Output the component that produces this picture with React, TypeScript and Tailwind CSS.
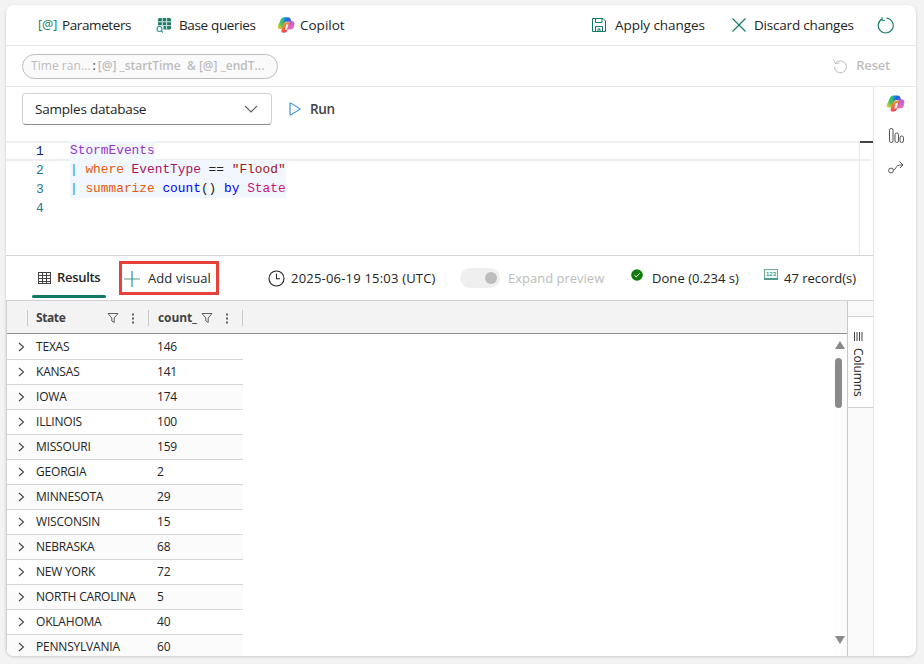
import React from "react";

const rows: [string, number][] = [
  ["TEXAS", 146], ["KANSAS", 141], ["IOWA", 174], ["ILLINOIS", 100], ["MISSOURI", 159], ["GEORGIA", 2],
  ["MINNESOTA", 29], ["WISCONSIN", 15], ["NEBRASKA", 68], ["NEW YORK", 72], ["NORTH CAROLINA", 5], ["OKLAHOMA", 40], ["PENNSYLVANIA", 60],
];

function CopilotIcon({ id, size }: { id: string; size: number }) {
  return (
    <svg width={size} height={size} viewBox="0 0 20 20" className="shrink-0">
      <defs>
        <linearGradient id={id + "a"} x1="0" y1="0" x2="1" y2="0.4">
          <stop offset="0" stopColor="#17a9d8" />
          <stop offset="0.55" stopColor="#1f63dd" />
          <stop offset="1" stopColor="#7a55e0" />
        </linearGradient>
        <linearGradient id={id + "b"} x1="0.2" y1="0" x2="0.6" y2="1">
          <stop offset="0" stopColor="#f7a93c" />
          <stop offset="0.5" stopColor="#f4683f" />
          <stop offset="1" stopColor="#e93d5c" />
        </linearGradient>
        <linearGradient id={id + "c"} x1="0.8" y1="0" x2="0.2" y2="1">
          <stop offset="0" stopColor="#1fb5a0" />
          <stop offset="0.6" stopColor="#55c24e" />
          <stop offset="1" stopColor="#e5cf3a" />
        </linearGradient>
        <linearGradient id={id + "d"} x1="0.3" y1="0" x2="0.7" y2="1">
          <stop offset="0" stopColor="#a35fe6" />
          <stop offset="1" stopColor="#f06bb0" />
        </linearGradient>
      </defs>
      <path d="M8 1.500C6 1.500 4.800 2.500 4 4.500L1 11c-.8 2 .2 3.500 2.300 3.500H6.500L10 4.500z" fill={`url(#${id}c)`} />
      <path d="M8 1.500h4c1.800 0 2.800.8 3.300 2.500l.7 2.500H10C9 6.500 8.300 7 8 8L7 11 8 1.500z" fill={`url(#${id}a)`} />
      <path d="M13.500 5.500H16c2.500 0 3.800 1.800 3.300 4l-.6 2.500c-.5 2-1.800 3-3.700 3H11.500z" fill={`url(#${id}d)`} />
      <path d="M9.800 7H14l-2.200 8c-.6 2.200-1.800 3.500-3.800 3.500H7c-1.800 0-2.600-1.200-2-3l2.400-6.800C7.800 7.700 8.600 7 9.800 7z" fill={`url(#${id}b)`} />
      <path d="M10.300 9.500h2.400l-1.600 5.800H8.600z" fill="#fff" opacity="0.9" />
    </svg>
  );
}

function BaseQueriesIcon() {
  return (
    <svg width="16" height="16" viewBox="0 0 16 16" className="shrink-0">
      <rect x="2" y="1" width="13" height="11.500" rx="1.500" fill="#1f7a68" />
      <path d="M6.300 1v11.500M10.600 1v11.500M2 4.800h13M2 8.600h13" stroke="#cfe6df" strokeWidth="1" />
      <rect x="0.500" y="9" width="7" height="7" fill="#fff" />
      <circle cx="3.500" cy="12" r="2.500" fill="#fff" stroke="#2a8fa5" strokeWidth="1.100" />
      <path d="M5.300 13.800l1.700 1.700" stroke="#2a8fa5" strokeWidth="1.100" />
    </svg>
  );
}

function ColumnFilter() {
  return (
    <svg width="12" height="12" viewBox="0 0 12 12" fill="none" stroke="#616161" strokeWidth="1" className="shrink-0">
      <path d="M1 1.500h10L7.200 6v4.500L4.800 9V6z" />
    </svg>
  );
}

function Kebab() {
  return (
    <svg width="4" height="12" viewBox="0 0 4 12" fill="#616161" className="shrink-0">
      <rect x="1" y="1.500" width="2" height="2" />
      <rect x="1" y="5.500" width="2" height="2" />
      <rect x="1" y="9.500" width="2" height="2" />
    </svg>
  );
}

export default function App() {
  return (
    <div className="h-[664px] w-[924px] overflow-hidden bg-[#f3f3f3] pl-[6px] pt-[5px] text-[13.5px] text-[#242424] [font-family:'Open_Sans','Noto_Sans',sans-serif]">
      <div className="flex h-[651px] w-[910px] flex-col overflow-hidden rounded-lg bg-white shadow-[0_1px_3px_rgba(0,0,0,0.18)]">
        {/* toolbar */}
        <div className="flex h-[41px] shrink-0 items-center border-b border-[#e8e8e8]">
          <span className="ml-[32px] w-[24px] text-[12.5px] text-[#117865]">[@]</span>
          <span className="w-[94px] tracking-[-0.4px]">Parameters</span>
          <BaseQueriesIcon />
          <span className="ml-[7px] w-[98px] tracking-[-0.35px]">Base queries</span>
          <CopilotIcon id="top" size={18} />
          <span className="ml-[5px]">Copilot</span>
          <div className="ml-auto flex items-center">
            <svg width="16" height="16" viewBox="0 0 16 16" fill="none" stroke="#117865" strokeWidth="1" className="shrink-0">
              <path d="M1.500 1.500h10.500l2.500 2.500v10.500h-13z" />
              <path d="M4.500 1.500v4h6.500v-4M4.500 14.500v-5h7v5M7 14.500v-2.500h2v2.500" />
            </svg>
            <span className="ml-[8px] w-[116px] tracking-[-0.05px]">Apply changes</span>
            <svg width="16" height="16" viewBox="0 0 16 16" fill="none" stroke="#117865" strokeWidth="1.100" className="shrink-0">
              <path d="M1.500 1.500l13 13M14.500 1.500l-13 13" />
            </svg>
            <span className="ml-[7px] w-[123px] tracking-[-0.2px]">Discard changes</span>
            <svg width="18" height="18" viewBox="0 0 18 18" fill="none" className="mr-[21px] shrink-0" stroke="#117865" strokeWidth="1.100">
              <path d="M5.300 2.800A7.500 7.500 0 1 0 9.500 2" />
              <path d="M5 1v3.500h3.200" stroke="#1f9e7f" />
            </svg>
          </div>
        </div>
        {/* filter chip row */}
        <div className="flex h-[41px] shrink-0 items-center border-b border-[#e8e8e8] pl-[16px]">
          <div className="flex h-[25px] w-[256px] items-center rounded-full border border-[#bdbdbd] bg-[#fafafa] pl-[8px] text-[12px] font-semibold whitespace-nowrap text-[#bdbdbd]">
            <span className="font-normal tracking-[0.05px]">Time ran...</span>
            <span className="mx-[2px] text-[#616161]">:</span>
            <span>[@] _startTime &nbsp;&amp; [@] _endT...</span>
          </div>
          <div className="ml-auto mr-[26px] flex items-center">
            <svg width="16" height="16" viewBox="0 0 16 16" fill="none" stroke="#bdbdbd" strokeWidth="1" className="shrink-0">
              <path d="M3.500 5.500A6 6 0 1 1 2.500 9" />
              <path d="M1.500 1.500l2 4 4-.5" />
            </svg>
            <span className="ml-[8px] text-[13px] font-semibold tracking-[-0.2px] text-[#bdbdbd]">Reset</span>
          </div>
        </div>
        {/* editor area + rail */}
        <div className="flex min-h-0 flex-1">
          <div className="flex w-[868px] shrink-0 flex-col border-r border-[#e5e5e5]">
            <div className="flex h-[169px] shrink-0 flex-col border-b border-[#d6d6d6]">
              <div className="flex h-[54px] shrink-0 items-start pl-[16px] pt-[6px]">
                <div className="flex h-[32px] w-[250px] items-center justify-between rounded-[4px] border border-[#d1d1d1] border-b-[#8a8a8a] pl-[12px] pr-[13px]">
                  <span className="tracking-[-0.2px]">Samples database</span>
                  <svg width="14" height="8" viewBox="0 0 14 8" fill="none" stroke="#616161" strokeWidth="1.100"><path d="M1 1l6 6 6-6" /></svg>
                </div>
                <div className="ml-[17px] flex h-[32px] items-center">
                  <svg width="12" height="14" viewBox="0 0 12 14" fill="none" stroke="#2b88d8" strokeWidth="1.100" className="shrink-0">
                    <path d="M1 1.500v11a.5.5 0 0 0 .8.4l9-5.500a.5.5 0 0 0 0-.8l-9-5.500A.5.500 0 0 0 1 1.500z" />
                  </svg>
                  <span className="ml-[9px] text-[13.5px] font-semibold tracking-[-0.3px] text-[#424242]">Run</span>
                </div>
              </div>
              <div className="relative flex flex-1 text-[12.83px] leading-[19px] [font-family:'Liberation_Mono',monospace]">
                <div className="absolute left-0 right-[2px] top-0 h-[20px] border-y-2 border-[#efefef]" />
                <div className="absolute right-[13px] top-0 bottom-0 w-px bg-[#e8e8e8]" />
                <div className="absolute right-0 top-0 h-[2px] w-[13px] bg-[#444]" />
                <div className="w-[64px] shrink-0 pl-[30px] pt-[0.5px] text-[#237893]">
                  <div className="text-[#0b216f]">1</div>
                  <div>2</div>
                  <div>3</div>
                  <div>4</div>
                </div>
                <div className="relative whitespace-pre">
                  <div className="w-[85px] bg-[#f2f7fe]"><span className="text-[#9a35c9]">StormEvents</span></div>
                  <div className="w-[216px] bg-[#f2f7fe]"><span className="text-[#2b88d8]">|</span> <span className="text-[#e8590c]">where</span> <span className="text-[#a31660]">EventType</span> == <span className="text-[#a31515]">"Flood"</span></div>
                  <div className="w-[216px] bg-[#f2f7fe]"><span className="text-[#2b88d8]">|</span> <span className="text-[#e8590c]">summarize</span> <span className="text-[#0000ff]">count</span>() <span className="text-[#0000ff]">by</span> <span className="text-[#c7157a]">State</span></div>
                </div>
              </div>
            </div>
            {/* results bar */}
            <div className="flex h-[45px] shrink-0 items-center border-b border-[#d1d1d1] pl-[26px]">
              <div className="relative flex h-full w-[74px] items-center pl-[6px]">
                <svg width="13" height="12" viewBox="0 0 13 12" fill="none" stroke="#424242" strokeWidth="1" className="shrink-0">
                  <rect x="0.500" y="0.500" width="12" height="11" />
                  <path d="M0.500 3.500h12M0.500 6.500h12M0.500 9.500h12M4.500 0.500v11M8.500 0.500v11" />
                </svg>
                <span className="ml-[6px] text-[13px] font-semibold tracking-[-0.3px]">Results</span>
                <span className="absolute bottom-[2px] left-0 right-0 h-[3px] rounded-full bg-[#117865]" />
              </div>
              <div className="ml-[13px] flex h-[34px] w-[100px] items-center border-[3px] border-[#e8403a] pl-[2px] pt-[1px]">
                <svg width="16" height="16" viewBox="0 0 16 16" className="shrink-0">
                  <path d="M0 8h16" stroke="#7fb0a6" strokeWidth="1.300" />
                  <path d="M8 0v16" stroke="#2c9ac7" strokeWidth="1.300" />
                </svg>
                <span className="ml-[8px] whitespace-nowrap text-[13px] tracking-[0.1px]">Add visual</span>
              </div>
              <svg width="17" height="17" viewBox="0 0 17 17" fill="none" stroke="#242424" strokeWidth="1.100" className="ml-[49px] shrink-0">
                <circle cx="8.500" cy="8.500" r="7.500" />
                <path d="M8.500 3.800v5h3.500" />
              </svg>
              <span className="ml-[6px] w-[169px] whitespace-nowrap pt-[2px] text-[13px] tracking-[0.2px]">2025-06-19 15:03 (UTC)</span>
              <div className="flex h-[20px] w-[40px] shrink-0 items-center justify-end rounded-full bg-[#efefef] pr-[3px]">
                <span className="h-[12px] w-[12px] rounded-full bg-[#bdbdbd]" />
              </div>
              <span className="ml-[8px] w-[123px] whitespace-nowrap pt-[2px] text-[13px] text-[#bdbdbd]">Expand preview</span>
              <svg width="12" height="12" viewBox="0 0 12 12" className="mb-[7px] shrink-0">
                <circle cx="6" cy="6" r="5.800" fill="#107c10" />
                <path d="M3.500 6.200l1.800 1.700 3.300-3.500" fill="none" stroke="#fff" strokeWidth="1" />
              </svg>
              <span className="ml-[9px] w-[112px] whitespace-nowrap pt-[2px] text-[13px] tracking-[0.05px]">Done (0.234 s)</span>
              <svg width="14" height="11" viewBox="0 0 14 11" className="mb-[7px] shrink-0">
                <rect x="0.500" y="0.500" width="13" height="10" fill="#f1f8f6" stroke="#6fa89b" />
                <rect x="0" y="9" width="14" height="2" fill="#4d9c8a" />
                <text x="7" y="7" textAnchor="middle" fontSize="6" fill="#117865" fontFamily="'Liberation Sans'">123</text>
              </svg>
              <span className="ml-[6px] whitespace-nowrap pt-[2px] text-[13px]">47 record(s)</span>
            </div>
            {/* grid */}
            <div className="flex min-h-0 flex-1 border-l border-[#d1d1d1] text-[12px]">
              <div className="relative flex min-w-0 flex-1 flex-col overflow-hidden">
                <div className="flex h-[33px] shrink-0 items-center border-b border-[#8f8f8f] bg-[#f3f3f3] pt-[1px] text-[12px] font-bold text-[#424242]">
                  <span className="ml-[20px] h-[16px] w-px bg-[#c8c8c8]" />
                  <span className="ml-[8px] w-[71px] tracking-[-0.4px]">State</span>
                  <ColumnFilter />
                  <span className="ml-[12px]"><Kebab /></span>
                  <span className="ml-[13px] h-[16px] w-px bg-[#c8c8c8]" />
                  <span className="ml-[9px] w-[43px] tracking-[-0.1px]">count_</span>
                  <ColumnFilter />
                  <span className="ml-[12px]"><Kebab /></span>
                  <span className="ml-[13px] h-[16px] w-px bg-[#c8c8c8]" />
                </div>
                <div className="flex min-h-0 flex-1 pt-[1px]">
                  <div className="w-[236px] shrink-0">
                    {rows.map(([state, count], i) => (
                      <div key={state} className={`flex h-[25px] items-center border-b border-[#d6d6d6] tracking-[-0.2px] ${i % 2 === 1 || i === 0 ? "bg-white" : "bg-[#fbfbfb]"}`}>
                        <svg width="7" height="10" viewBox="0 0 7 10" fill="none" stroke="#424242" strokeWidth="1.100" className="ml-[11px] shrink-0">
                          <path d="M1 1l4.500 4L1 9" />
                        </svg>
                        <span className="ml-[11px] w-[121px] shrink-0 whitespace-nowrap">{state}</span>
                        <span>{count}</span>
                      </div>
                    ))}
                  </div>
                </div>
                {/* scrollbar overlays the grid */}
                <div className="absolute bottom-0 right-0 top-[33px] w-[14px] bg-[#fdfdfd]">
                  <svg width="10" height="8" viewBox="0 0 10 8" className="absolute left-[2px] top-[7px]" fill="#8a8a8a"><path d="M5 0l5 8H0z" /></svg>
                  <div className="absolute left-[2px] top-[24px] h-[50px] w-[7px] rounded-full bg-[#8a8a8a]" />
                  <svg width="10" height="8" viewBox="0 0 10 8" className="absolute bottom-[12px] left-[2px]" fill="#8a8a8a"><path d="M5 8l5-8H0z" /></svg>
                </div>
              </div>
              {/* columns side tab */}
              <div className="flex w-[26px] shrink-0 flex-col border-l border-[#c8c8c8] bg-[#f9f9f9]">
                <div className="mt-[15px] flex h-[92px] flex-col items-center border-y border-[#d1d1d1] bg-white pr-[5px] pt-[15px]">
                  <svg width="10" height="9" viewBox="0 0 10 9" stroke="#424242" strokeWidth="1" className="shrink-0">
                    <path d="M1.500 0v9M4 0v9M6.500 0v9M9 0v9" />
                  </svg>
                  <span className="mt-[7px] text-[12px] leading-[14px] tracking-[-0.1px] [writing-mode:vertical-rl]">Columns</span>
                </div>
              </div>
            </div>
          </div>
          {/* right rail */}
          <div className="flex flex-1 flex-col items-center pt-[7px]">
            <CopilotIcon id="rail" size={19} />
            <svg width="15" height="15" viewBox="0 0 15 15" fill="none" stroke="#424242" strokeWidth="0.900" className="ml-[2px] mt-[15px]">
              <rect x="0.500" y="0.500" width="3.500" height="14" rx="1.700" />
              <rect x="6" y="5" width="3.500" height="9.500" rx="1.700" />
              <rect x="11" y="8" width="3.500" height="6.500" rx="1.700" />
            </svg>
            <svg width="16" height="14" viewBox="0 0 16 14" fill="none" stroke="#424242" strokeWidth="0.900" className="ml-[2px] mt-[17px]">
              <circle cx="3" cy="10.500" r="2.400" />
              <path d="M5.300 10c2.700-.5 2.500-3.500 4.500-4.500 1.200-.5 2.700-.5 4.700-.5" />
              <path d="M11.500 1.500L15 5l-3 3" />
            </svg>
          </div>
        </div>
      </div>
    </div>
  );
}
